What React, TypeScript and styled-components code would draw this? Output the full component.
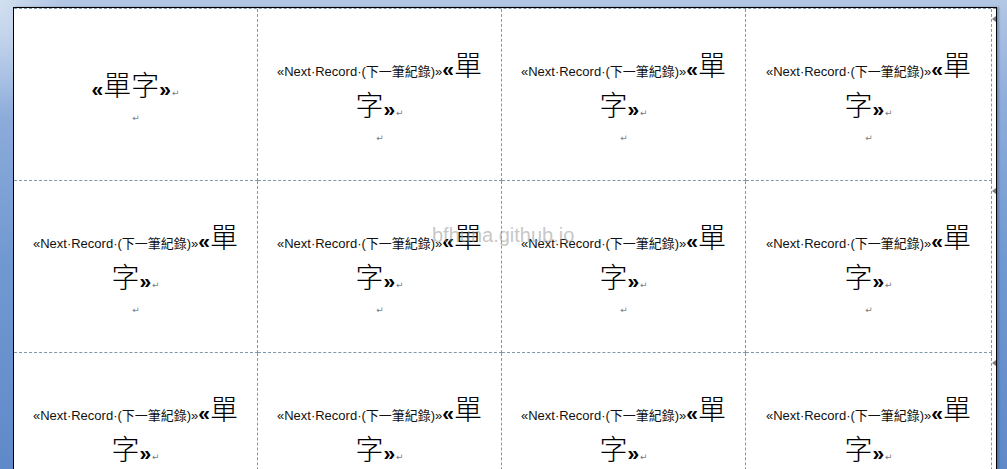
import styled, { createGlobalStyle } from 'styled-components';

const GlobalStyle = createGlobalStyle`
  html, body {
    margin: 0;
    padding: 0;
  }
  body {
    background:
      radial-gradient(ellipse 60px 120px at 0 0, rgba(225, 234, 246, 0.7), rgba(225, 234, 246, 0) 100%),
      linear-gradient(180deg, #b3c7e5 0%, #8eaddb 22%, #7199d1 55%, #6089c9 100%);
    font-family: "Liberation Sans", "Noto Sans CJK TC", sans-serif;
  }
`;

const Screen = styled.div`
  height: 469px;
  overflow: hidden;
  position: relative;
`;

const Page = styled.div`
  margin: 7px 0 0 13px;
  width: 984px;
  height: 480px;
  box-sizing: border-box;
  background: #fff;
  border: 1px solid #000;
  border-bottom: none;
  box-shadow: 2px 0 2px rgba(40, 60, 100, 0.35);
`;

const LabelGrid = styled.div`
  display: grid;
  grid-template-columns: 244px 244px 244px 246px;
  grid-auto-rows: 172px;
  border-top: 1px dashed #7f98ab;
`;

const Cell = styled.div<{ $rowEnd?: boolean }>`
  position: relative;
  box-sizing: border-box;
  border-right: 1px dashed #7f98ab;
  border-bottom: 1px dashed #7f98ab;
  padding: 3px 12px 0;
  display: flex;
  flex-direction: column;
  justify-content: center;
  text-align: center;
  color: #000;

  ${({ $rowEnd }) =>
    $rowEnd &&
    `
    &::after {
      content: '';
      position: absolute;
      right: -5px;
      top: 7px;
      border-top: 3px solid transparent;
      border-bottom: 3px solid transparent;
      border-right: 4px solid #7a7a7a;
    }
  `}
`;

const Para = styled.p`
  margin: 0;
  line-height: 32px;
`;

const EmptyPara = styled.p`
  margin: 0;
  line-height: 13px;
`;

const Small = styled.span`
  font-family: "Liberation Sans", "Noto Sans CJK TC", sans-serif;
  font-size: 13px;
  color: #111;
`;

const Big = styled.span`
  font-family: "Noto Sans CJK TC", sans-serif;
  font-weight: 300;
  font-size: 28px;
`;

const Quote = styled.span`
  font-family: "Liberation Sans", sans-serif;
  font-weight: bold;
  font-size: 21px;
`;

const Mark = styled.span`
  font-family: "DejaVu Sans", sans-serif;
  font-size: 9px;
  color: #7c7c7c;
  margin-left: 1px;
`;

const Watermark = styled.div`
  position: absolute;
  left: 432px;
  top: 224px;
  font-family: "Liberation Sans", sans-serif;
  font-size: 20px;
  color: rgba(150, 150, 150, 0.55);
  pointer-events: none;
`;

const Word: React.FC = () => (
  <Big>
    <Quote>«</Quote>單字<Quote>»</Quote>
  </Big>
);

const App: React.FC = () => {
  const cells = Array.from({ length: 12 }, (_, i) => i);

  return (
    <Screen>
      <GlobalStyle />
      <Page>
        <LabelGrid>
          {cells.map((i) => (
            <Cell key={i} $rowEnd={i % 4 === 3}>
              <Para>
                {i > 0 && <Small>«Next·Record·(下一筆紀錄)»</Small>}
                <Word />
                <Mark>↵</Mark>
              </Para>
              <EmptyPara>
                <Mark>↵</Mark>
              </EmptyPara>
            </Cell>
          ))}
        </LabelGrid>
      </Page>
      <Watermark>bfhuna.github.io</Watermark>
    </Screen>
  );
};

export default App;
